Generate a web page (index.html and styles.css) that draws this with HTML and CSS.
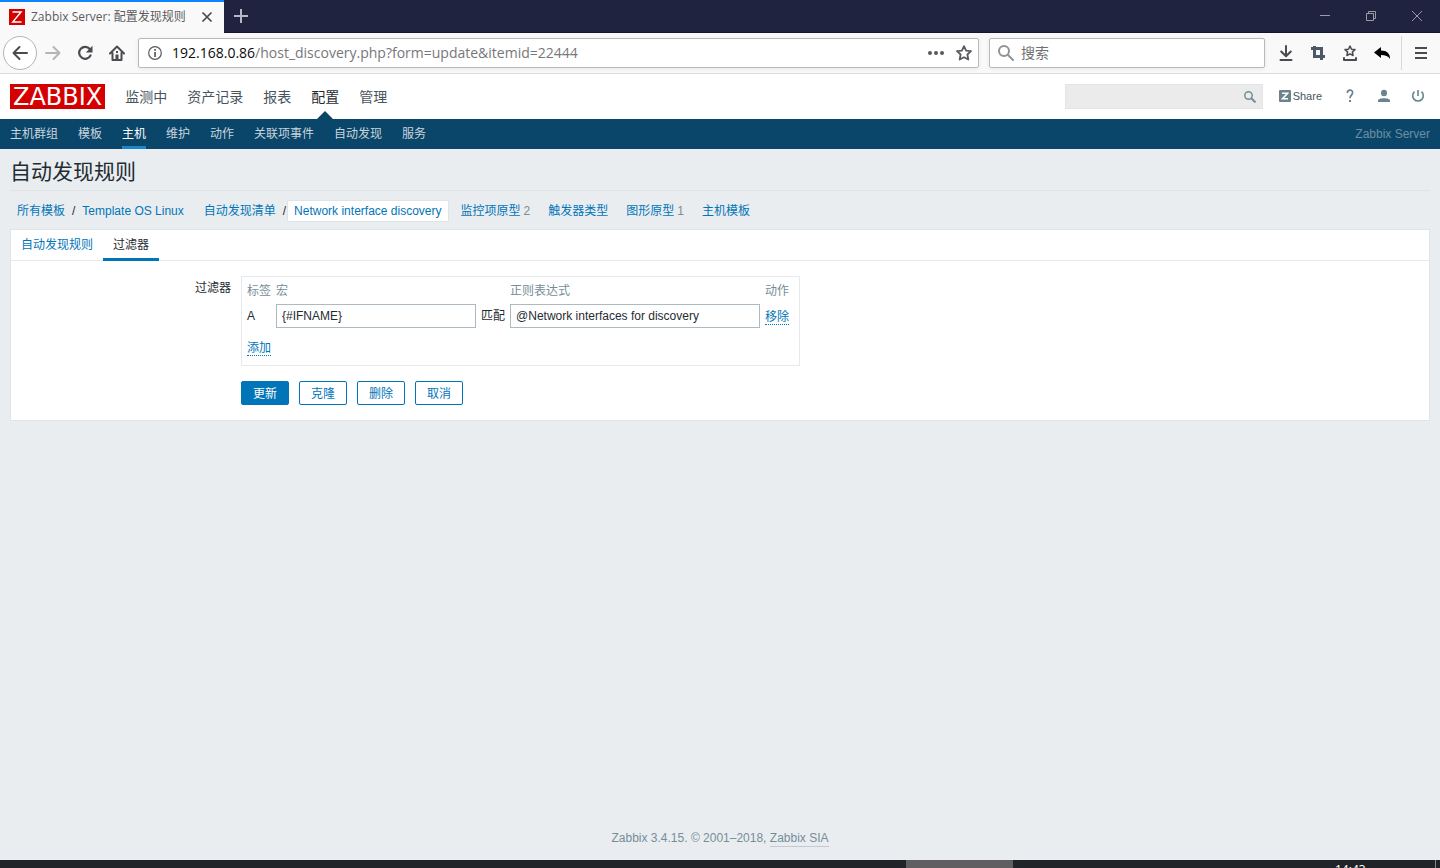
FILE: index.html
```html
<!DOCTYPE html>
<html lang="zh-CN">
<head>
<meta charset="utf-8">
<meta name="viewport" content="width=device-width, initial-scale=1">
<title>Zabbix Server: 配置发现规则</title>
<link rel="stylesheet" href="styles.css">
</head>
<body>
<div class="titlebar">
  <div class="browser-tab">
    <svg class="favicon" width="16" height="16" viewBox="0 0 16 16"><path fill="#d40000" d="M0 0h16v16H0z"/><path fill="none" stroke="#fff" stroke-width="1.4" d="M3.5 3h8.6L3.7 13h8.8"/></svg>
    <span class="tab-title">Zabbix Server: 配置发现规则</span>
    <button class="plain" aria-label="关闭标签页"><svg width="12" height="12" viewBox="0 0 12 12"><path stroke="#4a4a4f" stroke-width="1.7" d="M1.5 1.5l9 9m0-9l-9 9"/></svg></button>
  </div>
  <button class="plain new-tab" aria-label="新标签页"><svg width="14" height="14" viewBox="0 0 14 14"><path stroke="#b8b8c4" stroke-width="2" d="M7 0v14M0 7h14"/></svg></button>
  <div class="window-controls">
    <button class="plain" aria-label="最小化"><svg width="10" height="10" viewBox="0 0 10 10"><path stroke="#9a9aa9" d="M0 4.5h10"/></svg></button>
    <button class="plain" aria-label="还原"><svg width="10" height="10" viewBox="0 0 10 10"><path fill="none" stroke="#9a9aa9" d="M.5 2.5h7v7h-7zM2.500 2.500v-2h7v7h-2"/></svg></button>
    <button class="plain" aria-label="关闭"><svg width="10" height="10" viewBox="0 0 10 10"><path stroke="#9a9aa9" d="M0 0l10 10m0-10L0 10"/></svg></button>
  </div>
</div>

<div class="toolbar">
  <button class="plain back" aria-label="后退"><svg width="16" height="16" viewBox="0 0 16 16"><path fill="none" stroke="#4a4a4f" stroke-width="2" stroke-linecap="round" stroke-linejoin="round" d="M15 8H1.500M7.500 2l-6 6 6 6"/></svg></button>
  <button class="plain tool" aria-label="前进"><svg width="16" height="16" viewBox="0 0 16 16"><path fill="none" stroke="#b5b5b8" stroke-width="2" stroke-linecap="round" stroke-linejoin="round" d="M1 8h13.500M8.500 2l6 6-6 6"/></svg></button>
  <button class="plain tool" aria-label="刷新"><svg width="16" height="16" viewBox="0 0 16 16"><path fill="none" stroke="#4a4a4f" stroke-width="2.2" stroke-linecap="round" d="M12.800 4A6 6 0 1 0 13.500 10.500"/><path fill="#4a4a4f" d="M15.500.8v6.700H8.800z"/></svg></button>
  <button class="plain tool" aria-label="主页"><svg width="16" height="16" viewBox="0 0 16 16"><path fill="none" stroke="#4a4a4f" stroke-width="2" stroke-linejoin="round" stroke-linecap="round" d="M1 8.500L8 1.500l7 7M3.500 8v7h9V8"/><path fill="#4a4a4f" d="M6.500 9.500h3V15h-3zM7 6h2v2H7z"/></svg></button>
  <div class="urlbar">
    <svg width="14" height="14" viewBox="0 0 14 14"><circle cx="7" cy="7" r="6.300" fill="none" stroke="#5a5a5e" stroke-width="1.200"/><path fill="#5a5a5e" d="M6.200 3h1.700v1.700H6.200zM6.200 6h1.700v5H6.200z"/></svg>
    <span class="url"><b>192.168.0.86</b>/host_discovery.php?form=update&amp;itemid=22444</span>
    <button class="plain tool" aria-label="页面操作"><svg width="16" height="16" viewBox="0 0 16 16"><g fill="#5a5a5e"><circle cx="2" cy="8" r="2"/><circle cx="8" cy="8" r="2"/><circle cx="14" cy="8" r="2"/></g></svg></button>
    <button class="plain tool star" aria-label="收藏"><svg width="16" height="16" viewBox="0 0 16 16"><path fill="none" stroke="#5a5a5e" stroke-width="1.800" stroke-linejoin="round" d="M8 1.200l2.100 4.400 4.900.6-3.600 3.300.9 5L8 12.200 3.700 14.500l.9-5L1 6.200l4.900-.6z"/></svg></button>
  </div>
  <label class="searchbar">
    <svg width="16" height="16" viewBox="0 0 16 16"><circle cx="6" cy="6" r="5" fill="none" stroke="#929296" stroke-width="2"/><path stroke="#929296" stroke-width="2" stroke-linecap="round" d="M10 10l5 5"/></svg>
    <input type="text" placeholder="搜索" aria-label="搜索">
  </label>
  <div class="tools">
    <button class="plain tool" aria-label="下载"><svg width="16" height="16" viewBox="0 0 16 16"><path fill="none" stroke="#4a4a4f" stroke-width="2" stroke-linecap="round" stroke-linejoin="round" d="M8 1v10M3.200 6.500L8 11.200l4.800-4.700M2.500 15h11"/></svg></button>
    <button class="plain tool" aria-label="截图"><svg width="16" height="16" viewBox="0 0 16 16"><path fill="none" stroke="#4c5866" stroke-width="3" d="M1 3.500h10.500V15M15 11.500H4.500V1"/></svg></button>
    <button class="plain tool" aria-label="书签"><svg width="16" height="16" viewBox="0 0 16 16"><path fill="none" stroke="#4a4a4f" stroke-width="1.500" stroke-linejoin="round" d="M8 1l1.500 3.200 3.500.4-2.600 2.300.7 3.600L8 8.800l-3.100 1.700.7-3.600L3 4.600l3.500-.4z"/><path fill="none" stroke="#4a4a4f" stroke-width="2" stroke-linecap="round" stroke-linejoin="round" d="M2 13v2h12v-2"/></svg></button>
    <button class="plain tool" aria-label="撤销"><svg width="16" height="16" viewBox="0 0 16 16"><path d="M0 7.500L7 2v3.500c6 0 9 3 9 8.500-2-3-4.500-4-9-4v3z"/></svg></button>
  </div>
  <button class="plain menu" aria-label="菜单"><svg width="12" height="12" viewBox="0 0 12 12"><path stroke="#4a4a4f" stroke-width="2" d="M0 1h12M0 6h12M0 11h12"/></svg></button>
</div>

<header class="header">
  <a class="logo" href="#">ZABBIX</a>
  <nav class="main-nav">
    <a href="#">监测中</a><a href="#">资产记录</a><a href="#">报表</a><a class="active" href="#">配置</a><a href="#">管理</a>
  </nav>
  <form class="site-search">
    <input type="text" aria-label="搜索">
    <button class="plain" type="button" aria-label="搜索"><svg width="12" height="12" viewBox="0 0 12 12"><circle cx="4.500" cy="4.500" r="3.700" fill="none" stroke="#768d99" stroke-width="1.500"/><path stroke="#768d99" stroke-width="2" d="M7.300 7.300l4.200 4.200"/></svg></button>
  </form>
  <div class="user-links">
    <a class="share" href="#"><svg width="12" height="12" viewBox="0 0 12 12"><rect width="12" height="12" rx="1" fill="#6a838f"/><path fill="none" stroke="#fff" stroke-width="1.600" d="M3 3.200h5.600L3.500 8.800H9"/></svg>Share</a>
    <a href="#" aria-label="帮助"><svg width="14" height="14" viewBox="0 0 14 14"><path fill="none" stroke="#6a838f" stroke-width="1.700" d="M4.300 4C4.300.2 9.700.2 9.600 3.700 9.500 6 7 6.300 7 9.200"/><path fill="#6a838f" d="M6 11h2v2H6z"/></svg></a>
    <a href="#" aria-label="用户"><svg width="14" height="14" viewBox="0 0 14 14"><ellipse cx="7" cy="4" rx="3" ry="3.300" fill="#6a838f"/><path fill="#6a838f" d="M1 13v-1.500c0-3 12-3 12 0V13z"/></svg></a>
    <a href="#" aria-label="退出"><svg width="14" height="14" viewBox="0 0 14 14"><path fill="none" stroke="#6a838f" stroke-width="1.600" d="M3.500 2.700a5.300 5.300 0 1 0 7 0M7 1v6"/></svg></a>
  </div>
</header>

<nav class="sub-nav">
  <a href="#">主机群组</a><a href="#">模板</a><a class="active" href="#">主机</a><a href="#">维护</a><a href="#">动作</a><a href="#">关联项事件</a><a href="#">自动发现</a><a href="#">服务</a>
  <span class="server">Zabbix Server</span>
</nav>

<main class="main">
  <h1>自动发现规则</h1>
  <nav class="crumbs">
    <div class="crumb"><a href="#">所有模板</a><span class="slash">/</span><a href="#">Template OS Linux</a></div>
    <div class="crumb"><a href="#">自动发现清单</a><span class="slash last">/</span><a class="current" href="#">Network interface discovery</a></div>
    <div class="crumb"><a href="#">监控项原型</a><span class="count">2</span></div>
    <div class="crumb"><a href="#">触发器类型</a></div>
    <div class="crumb"><a href="#">图形原型</a><span class="count">1</span></div>
    <div class="crumb"><a href="#">主机模板</a></div>
  </nav>
  <form class="panel">
    <div class="tabs"><a href="#">自动发现规则</a><a class="active" href="#">过滤器</a></div>
    <div class="form-grid">
      <div class="form-label" id="filter-label">过滤器</div>
      <div class="filter-box">
        <table aria-labelledby="filter-label">
          <thead><tr><th>标签</th><th>宏</th><th></th><th>正则表达式</th><th>动作</th></tr></thead>
          <tbody>
            <tr class="condition"><td>A</td><td><input class="macro" type="text" value="{#IFNAME}" aria-label="宏"></td><td>匹配</td><td><input class="regex" type="text" value="@Network interfaces for discovery" aria-label="正则表达式"></td><td><button type="button" class="link">移除</button></td></tr>
            <tr class="add"><td colspan="5"><button type="button" class="link">添加</button></td></tr>
          </tbody>
        </table>
      </div>
      <div class="actions">
        <button type="button" class="btn primary">更新</button><button type="button" class="btn">克隆</button><button type="button" class="btn">删除</button><button type="button" class="btn">取消</button>
      </div>
    </div>
  </form>
</main>

<footer class="footer">Zabbix 3.4.15. © 2001–2018, <a href="#">Zabbix SIA</a></footer>
<div class="taskbar"><span class="task"></span><span class="clock">14:43</span></div>
</body>
</html>
```
FILE: styles.css
```css
* { box-sizing: border-box; }

body {
  margin: 0;
  min-height: 100vh;
  display: flex;
  flex-direction: column;
  background: #e9edf0;
  color: #1f2c33;
  font: 12px/18px "Liberation Sans", "Noto Sans CJK SC", sans-serif;
}

a { color: #0275b8; text-decoration: none; }
svg { display: block; flex: none; }
button, input { font: inherit; color: inherit; }

.plain {
  display: flex;
  align-items: center;
  justify-content: center;
  padding: 0;
  border: 0;
  background: none;
}

/* Browser chrome */
.titlebar {
  display: flex;
  height: 33px;
  background: #202340;
  border-bottom: 1px solid #14162b;
}
.browser-tab {
  display: flex;
  align-items: center;
  width: 224px;
  height: 33px;
  padding: 0 11px 2px 9px;
  border-top: 2px solid #0a84ff;
  background: #f9f9fa;
  color: #5c5c60;
  font-family: "Open Sans", "Noto Sans CJK SC", sans-serif;
}
.tab-title { flex: 1; margin-left: 6px; white-space: nowrap; }
.new-tab { width: 34px; }
.window-controls { display: flex; margin-left: auto; }
.window-controls button { width: 46px; }

.toolbar {
  display: flex;
  align-items: center;
  height: 41px;
  padding: 0 13px 0 3px;
  background: #f9f9fa;
  border-bottom: 1px solid #dcdcdd;
}
.back {
  width: 34px;
  height: 34px;
  margin-right: 8px;
  border: 1px solid #b4b4b6;
  border-radius: 50%;
  background: #fff;
}
.tool { width: 16px; height: 16px; }
.toolbar > .tool { margin-right: 16px; }
.urlbar, .searchbar {
  display: flex;
  align-items: center;
  height: 30px;
  border: 1px solid #b9b9bb;
  border-radius: 2px;
  background: #fff;
  box-shadow: 0 1px 4px rgba(0, 0, 0, .07);
}
.toolbar > .tool + .urlbar { margin-left: -3px; }
.urlbar {
  flex: 1;
  padding: 0 6px 0 9px;
  color: #77777a;
  font: 14px/20px "Open Sans", sans-serif;
}
.url { flex: 1; margin-left: 10px; white-space: nowrap; }
.url b { color: #0c0c0d; font-weight: 400; }
.star { margin-left: 12px; }
.searchbar { width: 276px; margin-left: 10px; padding: 0 8px; font-size: 14px; }
.searchbar input {
  flex: 1;
  min-width: 0;
  padding: 0;
  margin-left: 7px;
  border: 0;
  outline: 0;
  background: none;
}
.searchbar input::placeholder { color: #707073; opacity: 1; }
.tools { display: flex; gap: 16px; padding: 0 11px 0 13px; }
.menu { height: 34px; padding-left: 13px; border-left: 1px solid #d8d8da; }

/* Site header */
.header {
  display: flex;
  align-items: center;
  height: 45px;
  padding: 0 15px 0 10px;
  background: #fff;
}
.logo {
  height: 25px;
  padding: 0 3px;
  background: #d40000;
  color: #fff;
  font: 24px/27px "DejaVu Sans", sans-serif;
}
.main-nav {
  display: flex;
  align-self: stretch;
  gap: 20px;
  margin-left: 20px;
  font-size: 14px;
  line-height: 46px;
}
.main-nav a { position: relative; color: #47555e; }
.main-nav .active { color: #1f2c33; }
.main-nav .active::after {
  content: "";
  position: absolute;
  left: 50%;
  bottom: 0;
  margin-left: -8px;
  border: 8px solid transparent;
  border-top-width: 0;
  border-bottom-color: #0a466a;
}
.site-search {
  display: flex;
  width: 198px;
  height: 25px;
  margin: 0 16px 0 auto;
  background: #ebebeb;
  border: 1px solid #e2e4e5;
}
.site-search input { flex: 1; min-width: 0; border: 0; outline: 0; background: none; }
.site-search button { width: 24px; }
.user-links { display: flex; align-items: center; gap: 20px; padding-bottom: 1px; }
.share { display: flex; align-items: center; gap: 2px; margin-right: 1px; color: #47555e; font-size: 11px; }

.sub-nav {
  display: flex;
  gap: 20px;
  height: 30px;
  padding: 0 10px;
  background: #0a466a;
  line-height: 30px;
}
.sub-nav a { height: 30px; color: #c8d5dd; }
.sub-nav .active { color: #fff; border-bottom: 3px solid #1a86c9; }
.server { margin-left: auto; color: #6d8fa3; }

/* Page content */
.main { flex: 1; padding: 0 10px; }
h1 {
  height: 42px;
  margin: 0;
  border-bottom: 1px solid #dfe4e7;
  font-size: 21px;
  font-weight: 400;
  line-height: 45px;
}
.crumbs {
  display: flex;
  align-items: center;
  gap: 18px;
  height: 38px;
  padding: 2px 0 0 7px;
}
.crumb { display: flex; align-items: center; white-space: nowrap; }
.crumb:first-child { margin-right: 2px; }
.crumb:nth-child(2) { margin-right: -6px; }
.slash { margin: 0 7px; }
.slash.last { margin-right: 1px; }
.current {
  padding: 1px 6px;
  border: 1px solid #dfe4e7;
  border-radius: 2px;
  background: #fff;
}
.count { margin-left: 3px; color: #768d99; }

.panel { background: #fff; border: 1px solid #dfe4e7; }
.tabs { display: flex; height: 31px; border-bottom: 1px solid #e6eaec; line-height: 30px; }
.tabs a { height: 31px; padding: 0 10px; }
.tabs .active { color: #1f2c33; border-bottom: 3px solid #0275b8; }
.form-grid {
  display: grid;
  grid-template-columns: 220px 1fr;
  column-gap: 10px;
  row-gap: 15px;
  padding: 15px 0;
}
.form-label { padding-top: 3px; text-align: right; }
.filter-box {
  justify-self: start;
  padding: 4px 10px 2px 5px;
  border: 1px solid #e6eaec;
}
table { border-collapse: collapse; }
th, td { padding: 0 5px 0 0; text-align: left; white-space: nowrap; }
th:last-child, td:last-child { padding-right: 0; }
th { height: 20px; color: #768d99; font-weight: 400; }
.condition td { height: 30px; }
.add td { height: 32px; }
td input {
  display: block;
  height: 24px;
  padding: 0 5px;
  border: 1px solid #acbbc2;
  background: #fff;
}
.macro { width: 200px; }
.regex { width: 250px; }
.link {
  display: block;
  padding: 2px 0 0;
  border: 0;
  border-bottom: 1px dotted #0275b8;
  background: none;
  color: #0275b8;
  line-height: 14px;
}
.actions { grid-column: 2; display: flex; gap: 10px; }
.btn {
  width: 48px;
  height: 24px;
  padding: 1px 0 0;
  border: 1px solid #0275b8;
  border-radius: 2px;
  background: #fff;
  color: #0275b8;
}
.primary { background: #0275b8; color: #fff; }

.footer { padding-bottom: 13px; color: #768d99; text-align: center; }
.footer a { display: inline-block; color: #768d99; line-height: 15px; border-bottom: 1px solid #c0cad0; }

/* Top edge of the desktop taskbar */
.taskbar {
  display: flex;
  justify-content: flex-end;
  height: 8px;
  padding-right: 4px;
  overflow: hidden;
  background: #202428;
}
.task { width: 107px; margin-right: 322px; background: #5f5f61; }
.clock {
  width: 101px;
  border-right: 1px solid #85878a;
  color: #fff;
  font: 12px/20px "Open Sans", sans-serif;
}
```
